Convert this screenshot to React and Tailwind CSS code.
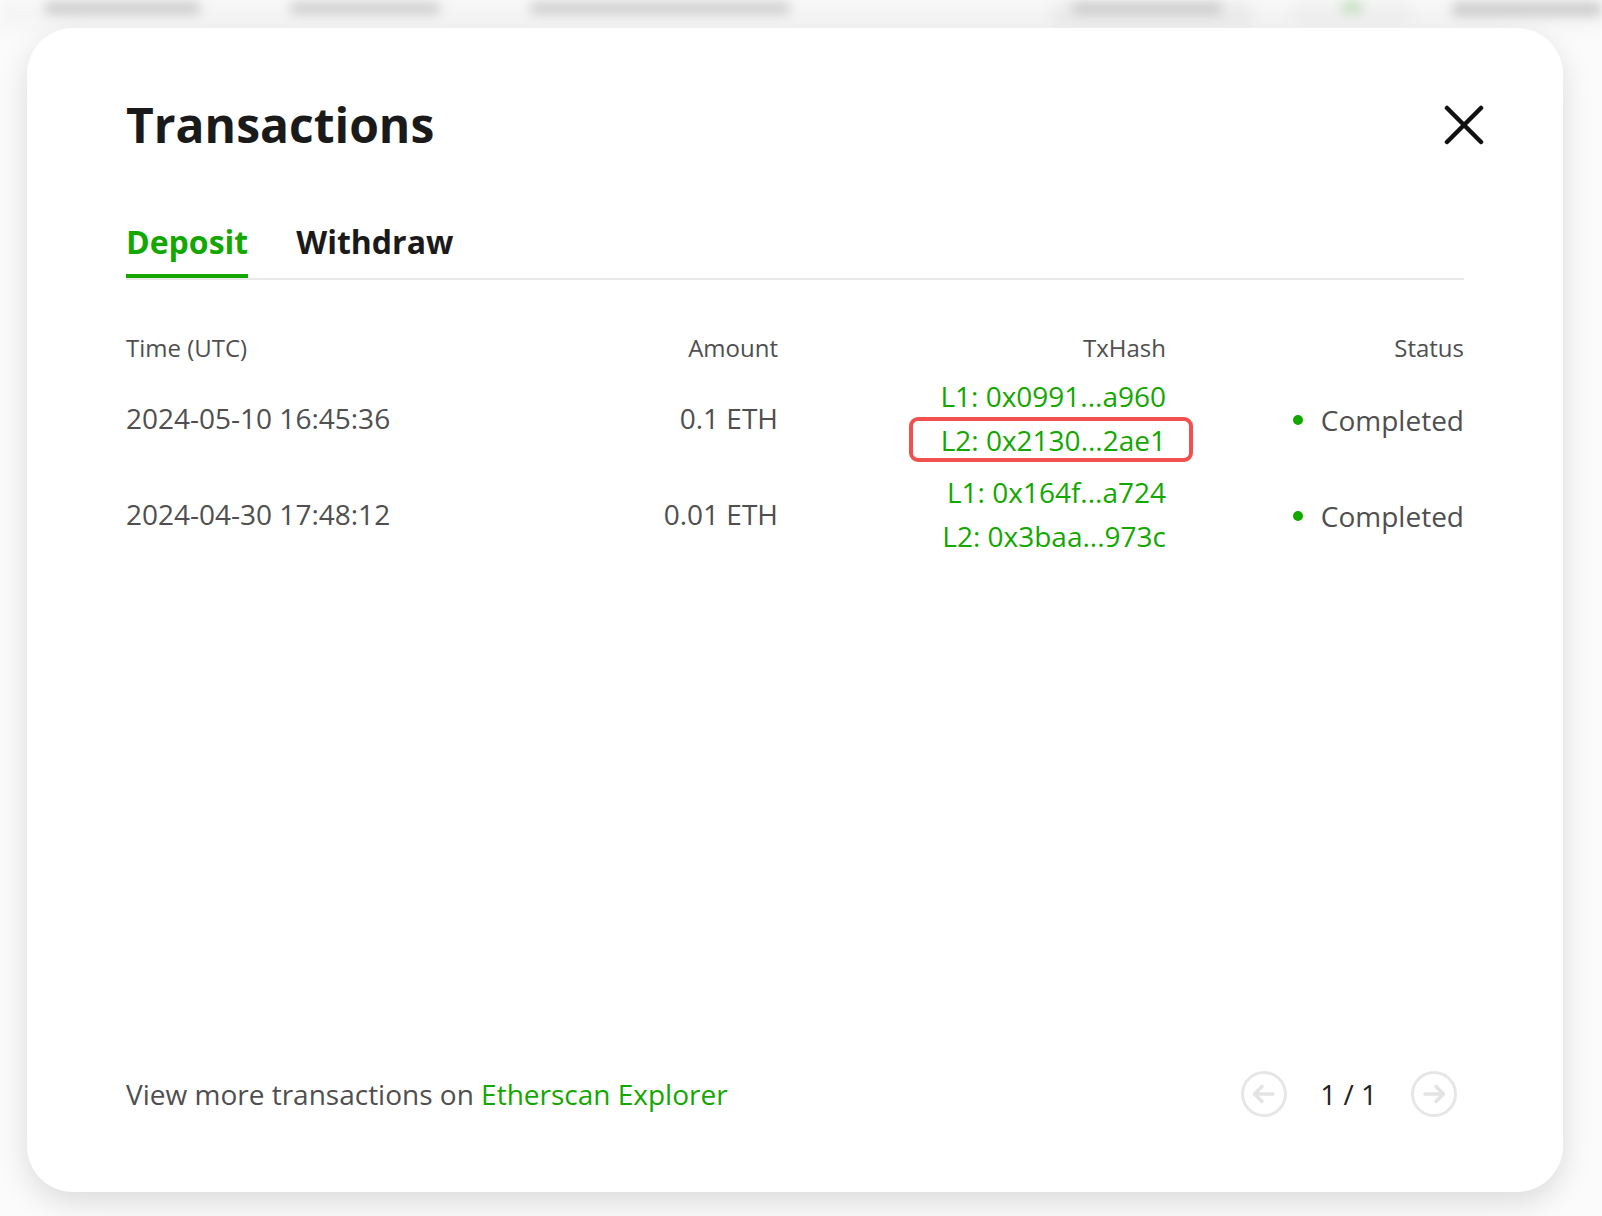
import React from "react";

const GREEN = "text-[#13a700]";

function CloseIcon() {
  return (
    <svg width="40" height="40" viewBox="0 0 40 40" fill="none" className="-mr-[20px]">
      <path d="M3 3 L37 37 M37 3 L3 37" stroke="#111" strokeWidth="4.5" strokeLinecap="round" />
    </svg>
  );
}

function ArrowCircle({ dir }) {
  const d =
    dir === "left"
      ? "M33 24 H15 M22 16.5 L14.5 24 L22 31.5"
      : "M15 24 H33 M26 16.5 L33.5 24 L26 31.5";
  return (
    <svg width="48" height="48" viewBox="0 0 48 48" fill="none">
      <circle cx="24" cy="24" r="21.5" stroke="#e6e6e6" strokeWidth="3" />
      <path d={d} stroke="#e3e3e3" strokeWidth="3.5" strokeLinecap="round" strokeLinejoin="round" />
    </svg>
  );
}

function Row({ date, amount, l1, l2, boxed }) {
  return (
    <div className="grid grid-cols-[400px_252px_388px_1fr] items-center text-[28px] leading-[44px] text-[#4f4f4f]">
      <div>{date}</div>
      <div className="text-right">{amount}</div>
      <div className={`flex flex-col items-end ${GREEN}`}>
        <span>{l1}</span>
        <span className="relative">
          {l2}
          {boxed && (
            <span className="absolute -left-[32px] -right-[27px] -top-[1px] bottom-0 border-[4px] border-[#f24f4f] rounded-[9px]" />
          )}
        </span>
      </div>
      <div className="flex items-center justify-end gap-[18px] pt-[4px]">
        <span className="w-[10px] h-[10px] rounded-full bg-[#13a700]" />
        <span>Completed</span>
      </div>
    </div>
  );
}

export default function App() {
  return (
    <div
      className="relative w-[1602px] h-[1216px] bg-[#fbfbfb] overflow-hidden"
      style={{ fontFamily: "'Open Sans', 'Noto Sans', sans-serif" }}
    >
      {/* blurred page header behind modal */}
      <div className="h-[30px] bg-[#f5f5f5] flex items-start blur-[6px]">
        <div className="flex gap-[90px] pl-[45px] pt-[2px]">
          <div className="w-[155px] h-[12px] bg-[#c9c9c9] rounded" />
          <div className="w-[150px] h-[12px] bg-[#cdcdcd] rounded" />
          <div className="w-[260px] h-[12px] bg-[#cdcdcd] rounded" />
        </div>
        <div className="ml-auto flex items-start gap-[40px] pt-[0px]">
          <div className="w-[200px] h-[26px] bg-[#ececec] rounded-lg pt-[2px] px-[20px]">
            <div className="w-[150px] h-[12px] bg-[#cacaca] rounded" />
          </div>
          <div className="w-[120px] h-[26px] bg-[#f0f0f0] rounded-lg flex justify-center pt-[2px]">
            <div className="w-[20px] h-[10px] bg-[#b9dcb4] rounded" />
          </div>
          <div className="w-[150px] h-[14px] mt-[2px] bg-[#cbcbcb] rounded" />
        </div>
      </div>

      {/* modal */}
      <div className="absolute inset-0 pt-[28px] pl-[27px]">
        <div className="w-[1536px] h-[1164px] bg-white rounded-[46px] shadow-[0_10px_30px_rgba(0,0,0,0.13)] flex flex-col px-[99px] pt-[67px] pb-[74px]">
          <div className="flex items-center justify-between">
            <h1 className="text-[48px] leading-[60px] font-bold text-[#1a1a1a]">Transactions</h1>
            <CloseIcon />
          </div>

          <div className="mt-[65px] flex gap-[48px] border-b-2 border-[#e8e8e8]">
            <div className={`text-[32px] leading-[44px] font-bold ${GREEN} pb-[10px] border-b-4 border-[#13a700]`}>
              Deposit
            </div>
            <div className="text-[32px] leading-[44px] font-bold text-[#1a1a1a] pb-[10px] border-b-4 border-transparent">
              Withdraw
            </div>
          </div>

          <div className="mt-[52px] grid grid-cols-[400px_252px_388px_1fr] text-[24px] leading-[32px] text-[#4f4f4f]">
            <div>Time (UTC)</div>
            <div className="text-right">Amount</div>
            <div className="text-right">TxHash</div>
            <div className="text-right">Status</div>
          </div>

          <div className="mt-[10px] flex flex-col gap-[8px]">
            <Row date="2024-05-10 16:45:36" amount="0.1 ETH" l1="L1: 0x0991...a960" l2="L2: 0x2130...2ae1" boxed />
            <Row date="2024-04-30 17:48:12" amount="0.01 ETH" l1="L1: 0x164f...a724" l2="L2: 0x3baa...973c" />
          </div>

          <div className="mt-auto flex items-center justify-between h-[48px]">
            <div className="text-[28px] text-[#4f4f4f]">
              View more transactions on <span className={GREEN}>Etherscan Explorer</span>
            </div>
            <div className="flex items-center mr-[6px]">
              <ArrowCircle dir="left" />
              <span className="ml-[32px] mr-[33px] text-[28px] text-[#222]">1 / 1</span>
              <ArrowCircle dir="right" />
            </div>
          </div>
        </div>
      </div>
    </div>
  );
}
